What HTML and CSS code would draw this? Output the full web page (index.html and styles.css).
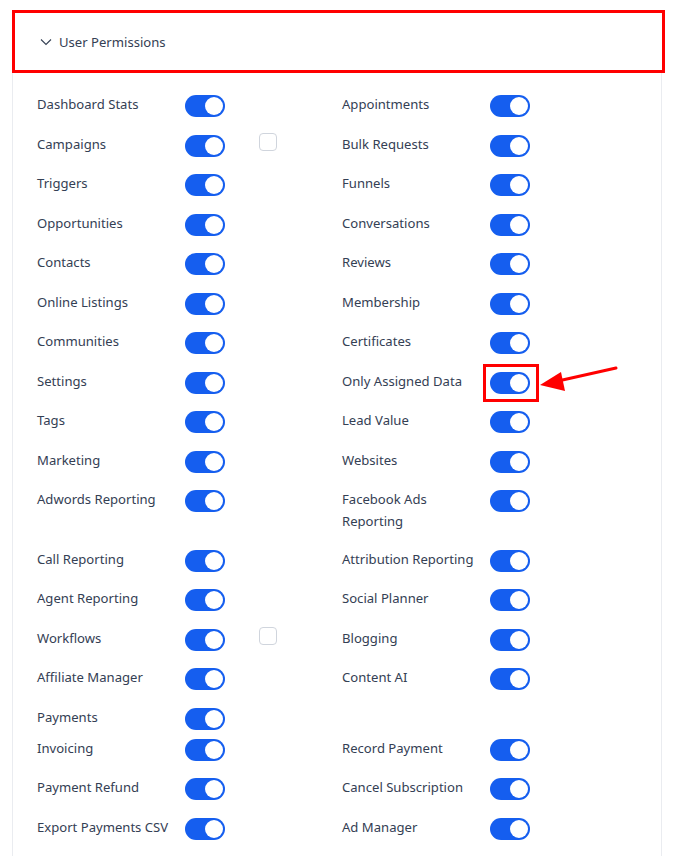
FILE: index.html
```html
<!DOCTYPE html>
<html>
<head>
<meta charset="utf-8">
<link rel="stylesheet" href="styles.css">
</head>
<body>
<div class="panel">
  <div class="header">
    <svg class="chevron" width="12" height="8" viewBox="0 0 12 8"><path d="M1 1.5 L6 6.5 L11 1.5" fill="none" stroke="#344054" stroke-width="1.1"/></svg>
    <span class="title">User Permissions</span>
  </div>
  <div class="body">
    <div class="grid">
      <div class="cell"><span class="label">Dashboard Stats</span><span class="toggle"></span></div>
      <div class="cell"><span class="label">Appointments</span><span class="toggle"></span></div>
      <div class="cell"><span class="label">Campaigns</span><span class="toggle"></span><span class="check"></span></div>
      <div class="cell"><span class="label">Bulk Requests</span><span class="toggle"></span></div>
      <div class="cell"><span class="label">Triggers</span><span class="toggle"></span></div>
      <div class="cell"><span class="label">Funnels</span><span class="toggle"></span></div>
      <div class="cell"><span class="label">Opportunities</span><span class="toggle"></span></div>
      <div class="cell"><span class="label">Conversations</span><span class="toggle"></span></div>
      <div class="cell"><span class="label">Contacts</span><span class="toggle"></span></div>
      <div class="cell"><span class="label">Reviews</span><span class="toggle"></span></div>
      <div class="cell"><span class="label">Online Listings</span><span class="toggle"></span></div>
      <div class="cell"><span class="label">Membership</span><span class="toggle"></span></div>
      <div class="cell"><span class="label">Communities</span><span class="toggle"></span></div>
      <div class="cell"><span class="label">Certificates</span><span class="toggle"></span></div>
      <div class="cell"><span class="label">Settings</span><span class="toggle"></span></div>
      <div class="cell"><span class="label">Only Assigned Data</span><span class="toggle highlight"><svg class="arrow" width="82" height="32" viewBox="0 0 82 32"><line x1="78" y1="4" x2="20" y2="17" stroke="#ff0000" stroke-width="3" stroke-linecap="round"/><polygon points="2,21 23,8 27,27" fill="#ff0000"/></svg></span></div>
      <div class="cell"><span class="label">Tags</span><span class="toggle"></span></div>
      <div class="cell"><span class="label">Lead Value</span><span class="toggle"></span></div>
      <div class="cell"><span class="label">Marketing</span><span class="toggle"></span></div>
      <div class="cell"><span class="label">Websites</span><span class="toggle"></span></div>
      <div class="cell"><span class="label">Adwords Reporting</span><span class="toggle"></span></div>
      <div class="cell"><span class="label">Facebook Ads Reporting</span><span class="toggle"></span></div>
      <div class="cell"><span class="label">Call Reporting</span><span class="toggle"></span></div>
      <div class="cell"><span class="label">Attribution Reporting</span><span class="toggle"></span></div>
      <div class="cell"><span class="label">Agent Reporting</span><span class="toggle"></span></div>
      <div class="cell"><span class="label">Social Planner</span><span class="toggle"></span></div>
      <div class="cell"><span class="label">Workflows</span><span class="toggle"></span><span class="check"></span></div>
      <div class="cell"><span class="label">Blogging</span><span class="toggle"></span></div>
      <div class="cell"><span class="label">Affiliate Manager</span><span class="toggle"></span></div>
      <div class="cell"><span class="label">Content AI</span><span class="toggle"></span></div>
    </div>
    <div class="cell single"><span class="label">Payments</span><span class="toggle"></span></div>
    <div class="grid sub">
      <div class="cell"><span class="label">Invoicing</span><span class="toggle"></span></div>
      <div class="cell"><span class="label">Record Payment</span><span class="toggle"></span></div>
      <div class="cell"><span class="label">Payment Refund</span><span class="toggle"></span></div>
      <div class="cell"><span class="label">Cancel Subscription</span><span class="toggle"></span></div>
      <div class="cell"><span class="label">Export Payments CSV</span><span class="toggle"></span></div>
      <div class="cell"><span class="label">Ad Manager</span><span class="toggle"></span></div>
    </div>
  </div>
</div>
</body>
</html>
```
FILE: styles.css
```css
html, body {
  margin: 0;
  padding: 0;
  background: #ffffff;
}
body {
  font-family: "Noto Sans", "Open Sans", sans-serif;
  font-size: 13.1px;
  color: #344054;
}
.panel {
  margin: 10px 10px 0 12px;
  width: 653px;
}
.header {
  box-sizing: border-box;
  height: 63px;
  border: 3px solid #ff0000;
  display: flex;
  align-items: center;
  padding-left: 25px;
}
.chevron {
  margin-right: 7px;
}
.title {
  line-height: 22px;
}
.body {
  border-left: 1px solid #eaecf0;
  border-right: 1px solid #eaecf0;
  width: 650px;
  box-sizing: border-box;
  padding: 20px 24px 30px 24px;
}
.grid {
  display: grid;
  grid-template-columns: 305px 305px;
  row-gap: 15.5px;
}
.grid.sub {
  margin-top: 7px;
}
.cell {
  display: flex;
  align-items: flex-start;
  line-height: 22px;
}
.cell.single {
  margin-top: 15.5px;
}
.label {
  width: 140px;
  margin-right: 8px;
}
.toggle {
  position: relative;
  flex: none;
  width: 40px;
  height: 22px;
  margin-top: 2px;
  border-radius: 11px;
  background: #155eef;
}
.toggle::after {
  content: "";
  position: absolute;
  top: 2px;
  right: 2px;
  width: 18px;
  height: 18px;
  border-radius: 50%;
  background: #ffffff;
}
.check {
  flex: none;
  box-sizing: border-box;
  width: 18px;
  height: 18px;
  margin-left: 34px;
  border: 1px solid #d0d5dd;
  border-radius: 4px;
  background: #ffffff;
}
.highlight::before {
  content: "";
  position: absolute;
  top: -8px;
  right: -9px;
  bottom: -8px;
  left: -7px;
  border: 3px solid #ff0000;
}
.arrow {
  position: absolute;
  left: 48px;
  top: -8px;
}
```
